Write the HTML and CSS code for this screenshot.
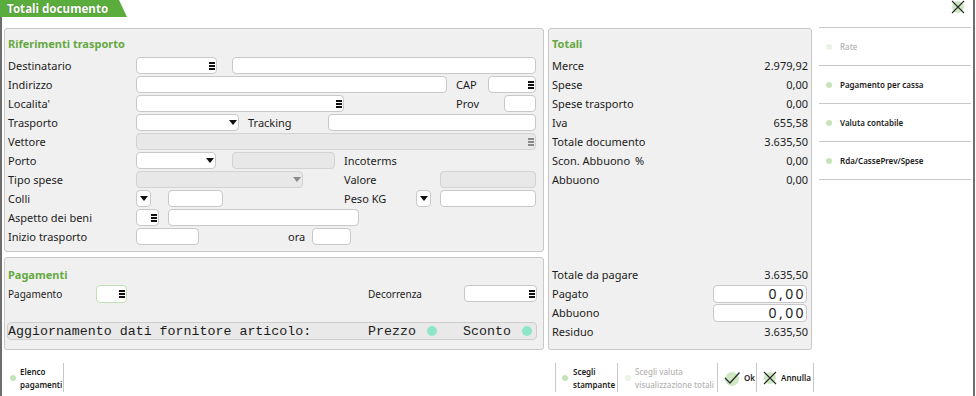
FILE: index.html
```html
<!DOCTYPE html>
<html lang="it">
<head>
    <meta charset="UTF-8">
    <meta name="viewport" content="width=device-width, initial-scale=1.0">
    <title>Totali documento</title>
    <link rel="stylesheet" href="styles.css">
</head>
<body>
<div class="window">
    <div class="titlebar">
        <div class="tab">Totali documento</div>
        <div class="close">
            <svg width="14" height="14" viewBox="0 0 14 14"><circle cx="7" cy="7" r="6" fill="#cfe8c4"/><path d="M1 1L13 13M13 1L1 13" stroke="#2b2b2b" stroke-width="1.2"/></svg>
        </div>
    </div>
    <div class="frame">
        <div class="main">
            <div class="col-left">
                <section class="panel transport">
                    <h3>Riferimenti trasporto</h3>
                    <div class="row">
                        <span class="lbl">Destinatario</span>
                        <span class="fld w81"><i class="menu"></i></span>
                        <span class="fld w304 ml15"></span>
                    </div>
                    <div class="row">
                        <span class="lbl">Indirizzo</span>
                        <span class="fld w311"></span>
                        <span class="sub ml9 w32">CAP</span>
                        <span class="fld w48"><i class="menu"></i></span>
                    </div>
                    <div class="row">
                        <span class="lbl">Localita'</span>
                        <span class="fld w208"><i class="menu"></i></span>
                        <span class="sub ml112 w48">Prov</span>
                        <span class="fld w32"></span>
                    </div>
                    <div class="row">
                        <span class="lbl">Trasporto</span>
                        <span class="fld w103"><i class="arrow"></i></span>
                        <span class="sub ml9 w80">Tracking</span>
                        <span class="fld w208"></span>
                    </div>
                    <div class="row">
                        <span class="lbl">Vettore</span>
                        <span class="fld off w400"><i class="menu"></i></span>
                    </div>
                    <div class="row">
                        <span class="lbl">Porto</span>
                        <span class="fld w80"><i class="arrow"></i></span>
                        <span class="fld off w103 ml16"></span>
                        <span class="sub ml9">Incoterms</span>
                    </div>
                    <div class="row">
                        <span class="lbl">Tipo spese</span>
                        <span class="fld off w167"><i class="arrow"></i></span>
                        <span class="sub ml41 w96">Valore</span>
                        <span class="fld off w96"></span>
                    </div>
                    <div class="row">
                        <span class="lbl">Colli</span>
                        <span class="fld w15 mid"><i class="arrow"></i></span>
                        <span class="fld w55 ml17"></span>
                        <span class="sub ml121 w72">Peso KG</span>
                        <span class="fld w15 mid"><i class="arrow"></i></span>
                        <span class="fld w96 ml9"></span>
                    </div>
                    <div class="row">
                        <span class="lbl">Aspetto dei beni</span>
                        <span class="fld w23"><i class="menu"></i></span>
                        <span class="fld w191 ml9"></span>
                    </div>
                    <div class="row">
                        <span class="lbl">Inizio trasporto</span>
                        <span class="fld w63"></span>
                        <span class="sub ml89 w24">ora</span>
                        <span class="fld w39"></span>
                    </div>
                </section>

                <section class="panel payments">
                    <h3>Pagamenti</h3>
                    <div class="row small">
                        <span class="lbl-pay">Pagamento</span>
                        <span class="fld focus w31"><i class="menu"></i></span>
                        <span class="sub ml241 w96">Decorrenza</span>
                        <span class="fld w73"><i class="menu"></i></span>
                    </div>
                    <div class="monobar">
                        <span class="mono-title">Aggiornamento dati fornitore articolo:</span>
                        <span class="mono-opt">Prezzo</span>
                        <span class="mint"></span>
                        <span class="mono-opt ml26">Sconto</span>
                        <span class="mint"></span>
                    </div>
                </section>
            </div>

            <section class="panel totals">
                <h3>Totali</h3>
                <div class="trow"><span>Merce</span><span>2.979,92</span></div>
                <div class="trow"><span>Spese</span><span>0,00</span></div>
                <div class="trow"><span>Spese trasporto</span><span>0,00</span></div>
                <div class="trow"><span>Iva</span><span>655,58</span></div>
                <div class="trow"><span>Totale documento</span><span>3.635,50</span></div>
                <div class="trow"><span class="w83">Scon. Abbuono</span><span>%</span><span class="push">0,00</span></div>
                <div class="trow"><span>Abbuono</span><span>0,00</span></div>

                <div class="totals-foot">
                    <div class="trow"><span>Totale da pagare</span><span>3.635,50</span></div>
                    <div class="trow"><span>Pagato</span><span class="amount">0,00</span></div>
                    <div class="trow"><span>Abbuono</span><span class="amount">0,00</span></div>
                    <div class="trow"><span>Residuo</span><span>3.635,50</span></div>
                </div>
            </section>

            <nav class="sidebar">
                <div class="side-item disabled"><span class="dot"></span>Rate</div>
                <div class="side-item"><span class="dot"></span>Pagamento per cassa</div>
                <div class="side-item"><span class="dot"></span>Valuta contabile</div>
                <div class="side-item"><span class="dot"></span>Rda/CassePrev/Spese</div>
            </nav>
        </div>

        <div class="toolbar">
            <div class="tool w60"><span class="dot"></span><span>Elenco<br>pagamenti</span></div>
            <div class="tool-group">
                <div class="tool w62"><span class="dot"></span><span>Scegli<br>stampante</span></div>
                <div class="tool w100 disabled"><span class="dot"></span><span>Scegli valuta<br>visualizzazione totali</span></div>
                <div class="tool w39">
                    <svg class="ico" width="16" height="16" viewBox="0 0 16 16"><circle cx="8" cy="9" r="7" fill="#cfe8c4"/><path d="M1 8L6 13L15.5 2.5" stroke="#2b2b2b" stroke-width="1.3" fill="none"/></svg>
                    <span>Ok</span>
                </div>
                <div class="tool w57">
                    <svg class="ico" width="14" height="14" viewBox="0 0 14 14"><circle cx="7" cy="7" r="6" fill="#cfe8c4"/><path d="M1 1L13 13M13 1L1 13" stroke="#2b2b2b" stroke-width="1.2"/></svg>
                    <span>Annulla</span>
                </div>
            </div>
        </div>
    </div>
</div>
</body>
</html>
```

FILE: styles.css
```css
* {
    box-sizing: border-box;
}
body {
    margin: 0;
    font-family: "Noto Sans", sans-serif;
    font-size: 11px;
    color: #1c1c1c;
    background-color: #fff;
}
.window {
    width: 975px;
    height: 396px;
    border-right: 2px solid #6e6e6e;
    display: flex;
    flex-direction: column;
}
.titlebar {
    height: 17px;
    display: flex;
    justify-content: space-between;
    align-items: flex-start;
    flex: none;
}
.tab {
    width: 127px;
    height: 17px;
    padding-left: 7px;
    background-color: #5aac3c;
    color: #fff;
    font-size: 11.6px;
    font-weight: 700;
    line-height: 17px;
    text-shadow: 0 0 1px rgba(0, 0, 0, 0.35);
    clip-path: polygon(0 0, 119px 0, 127px 100%, 0 100%);
}
.close {
    margin-right: 8px;
    height: 14px;
}
.frame {
    flex: 1;
    border-left: 2px solid #6e6e6e;
    padding: 11px 0 0 2px;
    display: flex;
    flex-direction: column;
}
.main {
    display: flex;
    align-items: flex-start;
}
.col-left {
    width: 540px;
    display: flex;
    flex-direction: column;
    gap: 5px;
}
.panel {
    background-color: #f0f0f0;
    border: 1px solid #c8c8c8;
    border-radius: 3px;
}
.panel h3 {
    margin: 0 0 3px;
    font-size: 11px;
    font-weight: 700;
    line-height: 19px;
    color: #64a841;
}
.transport {
    height: 224px;
    padding: 5px 6px 0 3px;
}
.payments {
    height: 93px;
    padding: 7px 6px 0 3px;
}
.payments h3 {
    margin-bottom: 0;
}
.row {
    display: flex;
    align-items: center;
    height: 19px;
    white-space: nowrap;
}
.lbl {
    width: 128px;
    flex: none;
}
.lbl-pay {
    width: 88px;
    flex: none;
}
.row.small {
    font-size: 10px;
}
.sub {
    flex: none;
}
.fld {
    height: 17px;
    flex: none;
    display: flex;
    align-items: center;
    justify-content: flex-end;
    padding-right: 1px;
    background-color: #fff;
    border: 1px solid #c8c8c8;
    border-radius: 4px;
}
.fld.off {
    background-color: #e8e8e8;
    border-color: #d2d2d2;
}
.fld.focus {
    height: 18px;
    border-color: #bfe0b2;
}
.fld.mid {
    justify-content: center;
    padding-right: 0;
}
.menu {
    width: 6px;
    height: 8px;
    background: linear-gradient(#111 0 2px, transparent 2px 3px, #111 3px 5px, transparent 5px 6px, #111 6px 8px);
}
.off .menu {
    background: linear-gradient(#8a8a8a 0 2px, transparent 2px 3px, #8a8a8a 3px 5px, transparent 5px 6px, #8a8a8a 6px 8px);
}
.arrow {
    width: 0;
    height: 0;
    border-left: 4px solid transparent;
    border-right: 4px solid transparent;
    border-top: 5px solid #111;
}
.off .arrow {
    border-top-color: #8a8a8a;
}

.w15 { width: 15px; }
.w23 { width: 23px; }
.w24 { width: 24px; }
.w31 { width: 31px; }
.w32 { width: 32px; }
.w39 { width: 39px; }
.w48 { width: 48px; }
.w55 { width: 55px; }
.w57 { width: 57px; }
.w60 { width: 60px; }
.w62 { width: 62px; }
.w63 { width: 63px; }
.w72 { width: 72px; }
.w73 { width: 73px; }
.w80 { width: 80px; }
.w81 { width: 81px; }
.w83 { width: 83px; flex: none; }
.w96 { width: 96px; }
.w100 { width: 100px; }
.w103 { width: 103px; }
.w167 { width: 167px; }
.w191 { width: 191px; }
.w208 { width: 208px; }
.w304 { width: 304px; }
.w311 { width: 311px; }
.w400 { width: 400px; }
.ml9 { margin-left: 9px; }
.ml15 { margin-left: 15px; }
.ml16 { margin-left: 16px; }
.ml17 { margin-left: 17px; }
.ml26 { margin-left: 26px; }
.ml41 { margin-left: 41px; }
.ml89 { margin-left: 89px; }
.ml112 { margin-left: 112px; }
.ml121 { margin-left: 121px; }
.ml241 { margin-left: 241px; }

.monobar {
    margin: 19px 0 0 -1px;
    width: 530px;
    height: 18px;
    display: flex;
    align-items: center;
    background-color: #e9e9e9;
    border: 1px solid #cdcdcd;
    border-radius: 4px;
    font-family: "Liberation Mono", monospace;
    font-size: 13.3px;
    white-space: nowrap;
}
.mono-title {
    width: 360px;
    flex: none;
}
.mono-opt {
    width: 59px;
    flex: none;
}
.mint {
    width: 10px;
    height: 10px;
    border-radius: 50%;
    background-color: #8de6c6;
    flex: none;
}

.totals {
    width: 264px;
    height: 322px;
    margin-left: 4px;
    padding: 5px 3px 8px 3px;
    display: flex;
    flex-direction: column;
}
.trow {
    height: 19px;
    display: flex;
    align-items: center;
    justify-content: space-between;
    white-space: nowrap;
}
.trow .push {
    margin-left: auto;
}
.totals-foot {
    margin-top: auto;
}
.amount {
    width: 94px;
    height: 18px;
    margin-right: 1px;
    text-align: right;
    background-color: #fff;
    border: 1px solid #c8c8c8;
    border-radius: 4px;
    font-size: 14px;
    line-height: 16px;
    letter-spacing: 2.4px;
    color: #222;
}

.sidebar {
    width: 152px;
    margin: -1px 0 0 7px;
    border-top: 1px solid #c8c8c8;
}
.side-item {
    height: 38px;
    padding-left: 7px;
    display: flex;
    align-items: center;
    border-bottom: 1px solid #c8c8c8;
    font-size: 8px;
    font-weight: 600;
    color: #1a1a1a;
}
.dot {
    width: 6px;
    height: 6px;
    margin-right: 8px;
    border-radius: 50%;
    background-color: #c6e4ba;
    flex: none;
}
.side-item.disabled {
    color: #b0b0b0;
    font-weight: 500;
}
.disabled .dot {
    background-color: #e9f4e5;
}

.toolbar {
    margin-top: 13px;
    height: 29px;
    padding-right: 159px;
    display: flex;
}
.tool-group {
    margin-left: auto;
    display: flex;
    border-left: 1px solid #c8c8c8;
}
.tool {
    height: 29px;
    padding-left: 6px;
    display: flex;
    align-items: center;
    border-right: 1px solid #c8c8c8;
    font-size: 8px;
    font-weight: 600;
    line-height: 13px;
    white-space: nowrap;
}
.tool .dot {
    margin-right: 4px;
}
.tool.w62 .dot {
    margin-right: 5px;
}
.tool.w100 {
    padding-left: 7px;
}
.tool.w100 .dot {
    margin-right: 4px;
}
.tool.disabled {
    color: #b4b4b4;
    font-weight: 500;
}
.tool .ico {
    margin-right: 4px;
    flex: none;
}
```
